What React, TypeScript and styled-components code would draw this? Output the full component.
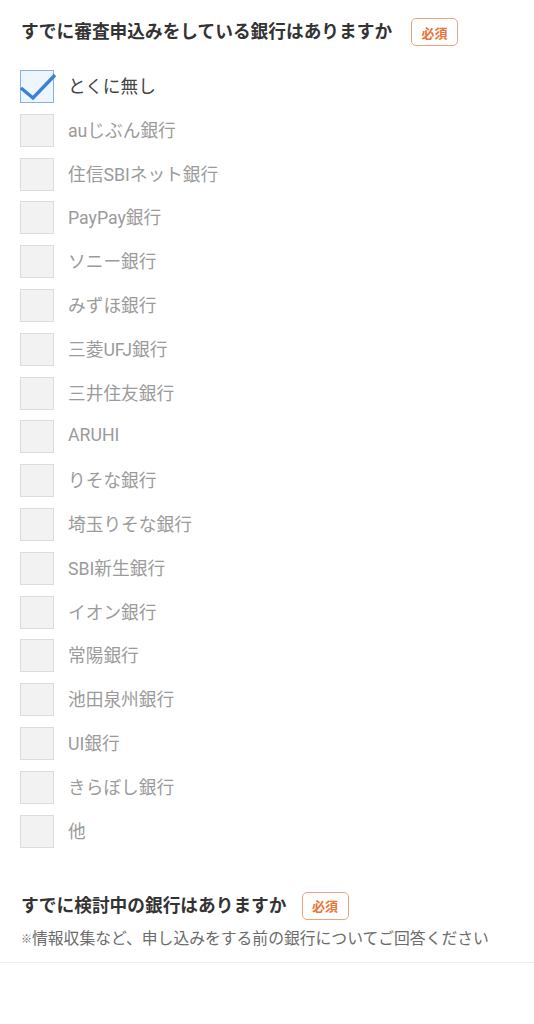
import React from 'react'
import styled, { createGlobalStyle } from 'styled-components'

const GlobalStyle = createGlobalStyle`
  body {
    margin: 0;
    background: #fff;
    font-family: Roboto, "Noto Sans CJK JP", sans-serif;
  }
`

const Page = styled.div`
  width: 534px;
`

const Section = styled.section<{ $top: number }>`
  padding: ${p => p.$top}px 21px 0 21px;
`

const QuestionRow = styled.div`
  display: flex;
  align-items: center;
  height: 28px;
`

const Question = styled.h2`
  margin: 0;
  font-size: 17.7px;
  font-weight: 700;
  color: #333;
  line-height: 28px;
`

const Required = styled.span<{ $gap?: number }>`
  box-sizing: border-box;
  margin-left: ${p => p.$gap ?? 19}px;
  width: 47px;
  height: 28px;
  border: 1px solid #f0a27c;
  border-radius: 5px;
  color: #ea7336;
  font-size: 13px;
  font-weight: 700;
  display: flex;
  align-items: center;
  justify-content: center;
`

const OptionList = styled.ul`
  list-style: none;
  margin: 24px 0 0 -1px;
  padding: 0;
  display: flex;
  flex-direction: column;
  gap: 10.8px;
`

const Option = styled.li`
  display: flex;
  align-items: center;
  height: 33px;
`

const Box = styled.span<{ $checked?: boolean }>`
  position: relative;
  box-sizing: border-box;
  width: 34px;
  height: 33px;
  flex-shrink: 0;
  background: ${p => (p.$checked ? '#eef5fd' : '#f2f2f2')};
  border: 1px solid ${p => (p.$checked ? '#80b2eb' : '#dcdcdc')};
`

const Check = styled.svg`
  position: absolute;
  left: -1px;
  top: 2px;
  overflow: visible;
`

const Label = styled.span<{ $checked?: boolean }>`
  margin-left: 14px;
  margin-top: -3px;
  font-size: 17.7px;
  color: ${p => (p.$checked ? '#444' : '#9b9b9b')};
`

const Note = styled.p`
  margin: 8px 0 0 0;
  font-size: 15.8px;
  color: #6b6b6b;
  line-height: 22px;
`

const Mark = styled.span`
  font-size: 11px;
  vertical-align: 1px;
`

const Divider = styled.hr`
  margin: 11px 0 0 0;
  border: none;
  border-top: 1.5px solid #ededed;
`

const banks = [
  'とくに無し',
  'auじぶん銀行',
  '住信SBIネット銀行',
  'PayPay銀行',
  'ソニー銀行',
  'みずほ銀行',
  '三菱UFJ銀行',
  '三井住友銀行',
  'ARUHI',
  'りそな銀行',
  '埼玉りそな銀行',
  'SBI新生銀行',
  'イオン銀行',
  '常陽銀行',
  '池田泉州銀行',
  'UI銀行',
  'きらぼし銀行',
  '他',
]

const App: React.FC = () => {
  return (
    <Page>
      <GlobalStyle />
      <Section $top={18}>
        <QuestionRow>
          <Question>すでに審査申込みをしている銀行はありますか</Question>
          <Required>必須</Required>
        </QuestionRow>
        <OptionList>
          {banks.map((name, i) => {
            const checked = i === 0
            return (
              <Option key={name}>
                <Box $checked={checked}>
                  {checked && (
                    <Check width="36" height="26" viewBox="0 0 36 26">
                      <path d="M1 15 L13 25 L35 2" fill="none" stroke="#3a82d6" strokeWidth="3.4" strokeLinejoin="miter" />
                    </Check>
                  )}
                </Box>
                <Label $checked={checked}>{name}</Label>
              </Option>
            )
          })}
        </OptionList>
      </Section>
      <Section $top={44}>
        <QuestionRow>
          <Question>すでに検討中の銀行はありますか</Question>
          <Required $gap={15}>必須</Required>
        </QuestionRow>
        <Note>
          <Mark>※</Mark>情報収集など、申し込みをする前の銀行についてご回答ください
        </Note>
      </Section>
      <Divider />
    </Page>
  )
}

export default App
